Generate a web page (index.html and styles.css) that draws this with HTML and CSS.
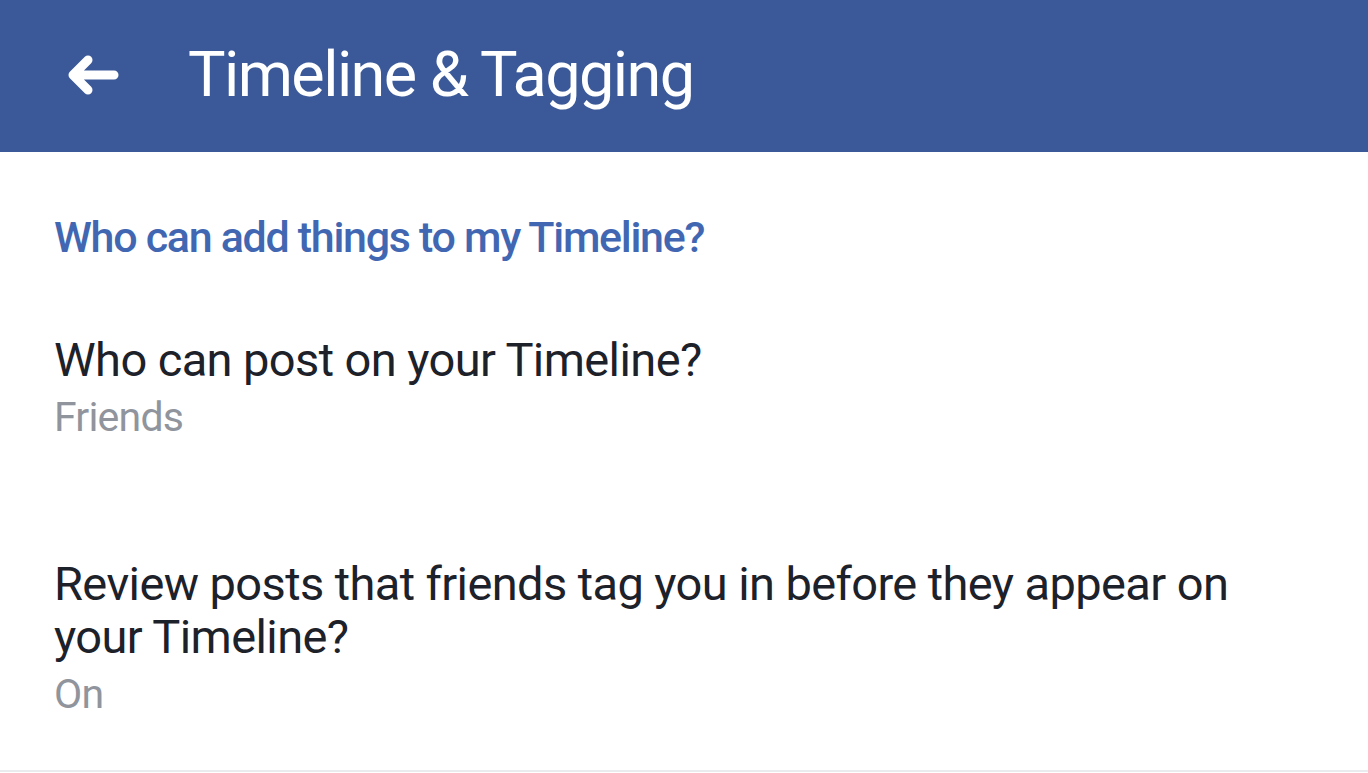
FILE: index.html
```html
<!DOCTYPE html>
<html lang="en">
<head>
    <meta charset="UTF-8">
    <meta name="viewport" content="width=device-width, initial-scale=1.0">
    <title>Timeline &amp; Tagging</title>
    <link rel="stylesheet" href="styles.css">
</head>
<body>
    <header class="app-bar">
        <button class="back-button" aria-label="Back">
            <svg width="56" height="44" viewBox="0 0 56 44">
                <path d="M50 22 H10 M24 7 L9 22 L24 37" fill="none" stroke="#fff" stroke-width="9" stroke-linecap="round" stroke-linejoin="round"/>
            </svg>
        </button>
        <h1>Timeline &amp; Tagging</h1>
    </header>

    <main class="settings">
        <h2 class="section-title">Who can add things to my Timeline?</h2>

        <div class="setting-item">
            <div class="setting-label">Who can post on your Timeline?</div>
            <div class="setting-value">Friends</div>
        </div>

        <div class="setting-item last">
            <div class="setting-label">Review posts that friends tag you in before they appear on your Timeline?</div>
            <div class="setting-value">On</div>
        </div>
    </main>
</body>
</html>
```

FILE: styles.css
```css
body {
    margin: 0;
    font-family: Roboto, 'Noto Sans', sans-serif;
    background: #fff;
    color: #1d2129;
}
.app-bar {
    height: 152px;
    background: #3b5998;
    display: flex;
    align-items: center;
    padding-left: 64px;
    box-sizing: border-box;
}
.back-button {
    background: none;
    border: none;
    padding: 0;
    width: 56px;
    height: 44px;
    margin-top: -2px;
    display: flex;
}
.app-bar h1 {
    margin: -4px 0 0 68px;
    color: #fff;
    font-weight: 400;
    font-size: 63px;
    letter-spacing: -1.6px;
}
.settings {
    padding: 0 40px 0 54px;
    border-bottom: 2px solid #e9ebee;
}
.section-title {
    margin: 0;
    padding-top: 58px;
    color: #4267b2;
    font-weight: 500;
    font-size: 43px;
    letter-spacing: -1.3px;
    line-height: 54px;
}
.setting-item {
    padding-top: 69px;
}
.setting-item.last {
    padding-top: 111px;
    padding-bottom: 47px;
}
.setting-label {
    font-size: 47px;
    line-height: 53px;
    letter-spacing: -0.6px;
    max-width: 1240px;
}
.setting-value {
    margin-top: 3px;
    color: #90949c;
    font-size: 41px;
    line-height: 57px;
    letter-spacing: -0.8px;
}
```
